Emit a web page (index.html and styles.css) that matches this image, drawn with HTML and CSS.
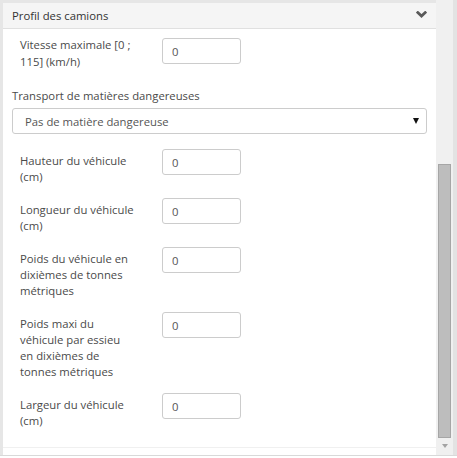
FILE: index.html
```html
<!DOCTYPE html>
<html lang="fr">
<head>
<meta charset="utf-8">
<title>Profil des camions</title>
<link rel="stylesheet" href="styles.css">
</head>
<body>
<div class="frame">
  <div class="viewport">
    <div class="content">
      <section class="panel">
        <div class="panel-heading">
          <span class="panel-title">Profil des camions</span>
          <svg class="chevron" width="11" height="7" viewBox="0 0 11 7"><polyline points="1.8,1.6 5.5,5 9.2,1.6" fill="none" stroke="#5a5a5a" stroke-width="2.8" stroke-linecap="square"/></svg>
        </div>
        <div class="panel-body">
          <div class="row row-top">
            <label class="lbl">Vitesse maximale [0 ; 115] (km/h)</label>
            <input class="field" type="text" value="0">
          </div>
          <label class="group-label">Transport de matières dangereuses</label>
          <div class="select"><span>Pas de matière dangereuse</span><span class="caret"></span></div>
          <div class="rows">
            <div class="row">
              <label class="lbl">Hauteur du véhicule (cm)</label>
              <input class="field" type="text" value="0">
            </div>
            <div class="row">
              <label class="lbl">Longueur du véhicule (cm)</label>
              <input class="field" type="text" value="0">
            </div>
            <div class="row">
              <label class="lbl">Poids du véhicule en dixièmes de tonnes métriques</label>
              <input class="field" type="text" value="0">
            </div>
            <div class="row">
              <label class="lbl">Poids maxi du véhicule par essieu<br>en dixièmes de tonnes métriques</label>
              <input class="field" type="text" value="0">
            </div>
            <div class="row">
              <label class="lbl">Largeur du véhicule (cm)</label>
              <input class="field" type="text" value="0">
            </div>
          </div>
        </div>
        <div class="panel-foot"></div>
      </section>
    </div>
    <div class="scrollbar">
      <div class="thumb"></div>
      <div class="arrow"></div>
    </div>
  </div>
  <div class="gutter"></div>
</div>
</body>
</html>
```
FILE: styles.css
```css
html, body {
  margin: 0;
  padding: 0;
  background: #fff;
}
body {
  width: 457px;
  height: 458px;
  overflow: hidden;
  font-family: "Open Sans", "Noto Sans", sans-serif;
  font-size: 11.3px;
  color: #4a4a4a;
}
.frame {
  display: flex;
  height: 455px;
  background: #e6e6e6;
  border-bottom: 1px solid #d9d9d9;
}
.viewport {
  display: flex;
  flex: 1;
}
.content {
  width: 436px;
  box-sizing: border-box;
  padding: 3px 0 0 3px;
  display: flex;
  flex-direction: column;
}
.panel {
  flex: 1;
  background: #fff;
  display: flex;
  flex-direction: column;
}
.panel-heading {
  height: 25px;
  flex: none;
  background: #f5f5f5;
  border-bottom: 1px solid #e0e0e0;
  display: flex;
  align-items: center;
  justify-content: space-between;
  padding: 0 9px 0 9px;
  color: #333;
}
.chevron {
  display: block;
  margin-top: -2px;
}
.panel-body {
  flex: 1;
  padding: 7px 9px 0 9px;
  border-bottom: 1px solid #f0f0f0;
}
.panel-foot {
  height: 7px;
  flex: none;
}
.row {
  display: flex;
  align-items: flex-start;
  padding-left: 8px;
}
.lbl {
  width: 118px;
  margin-right: 24px;
  line-height: 16px;
  padding-top: 4px;
}
.row-top .lbl {
  padding-top: 0;
  line-height: 17px;
}
.row-top .field {
  margin-top: 2px;
}
.field {
  width: 79px;
  height: 26px;
  box-sizing: border-box;
  margin: 0;
  border: 1px solid #ccc;
  border-radius: 3px;
  padding: 0 9px;
  font: inherit;
  color: #555;
  background: #fff;
}
.group-label {
  display: block;
  margin-top: 18px;
  line-height: 16px;
}
.select {
  margin-top: 4px;
  height: 26px;
  box-sizing: border-box;
  border: 1px solid #ccc;
  border-radius: 3px;
  display: flex;
  align-items: center;
  justify-content: space-between;
  padding: 0 7px 0 12px;
  color: #555;
}
.caret {
  width: 0;
  height: 0;
  border-left: 3px solid transparent;
  border-right: 3px solid transparent;
  border-top: 6px solid #111;
}
.rows {
  margin-top: 15px;
  display: flex;
  flex-direction: column;
  gap: 13px;
}
.scrollbar {
  width: 17px;
  background: #f0f0f0;
  display: flex;
  flex-direction: column;
  align-items: center;
}
.thumb {
  margin-top: 164px;
  width: 13px;
  height: 274px;
  box-sizing: border-box;
  background: #bdbdbd;
  border: 1px solid #a6a6a6;
}
.arrow {
  margin-top: 6px;
  width: 0;
  height: 0;
  border-left: 3.5px solid transparent;
  border-right: 3.5px solid transparent;
  border-top: 4px solid #a3a3a3;
}
.gutter {
  width: 4px;
  background: #e3e3e3;
}
```
